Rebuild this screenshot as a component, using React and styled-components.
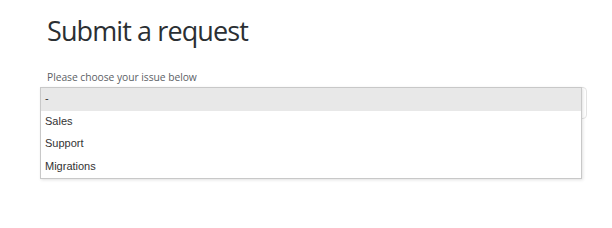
import React from "react";
import styled, { createGlobalStyle } from "styled-components";

const Global = createGlobalStyle`
  html, body { margin: 0; padding: 0; background: #fff; }
  body { width: 612px; height: 228px; overflow: hidden; }
`;

const Page = styled.div`
  padding: 12px 25px 0 40px;
  font-family: "Open Sans", "Noto Sans", sans-serif;
`;

const Title = styled.h1`
  margin: 0 0 0 7px;
  font-family: "Open Sans", sans-serif;
  font-weight: 400;
  font-size: 27px;
  letter-spacing: -0.9px;
  line-height: 38px;
  color: #2b2f33;
`;

const Label = styled.label`
  display: block;
  margin: 20px 0 3px 7px;
  font-size: 10.3px;
  letter-spacing: -0.05px;
  line-height: 14px;
  color: #5c6166;
`;

const SelectWrap = styled.div`
  position: relative;
`;

const SelectBox = styled.div`
  height: 32px;
  border: 1px solid #e3e3e3;
  border-radius: 4px;
  box-sizing: border-box;
`;

const Menu = styled.ul`
  position: absolute;
  top: 0;
  left: 0;
  width: 542px;
  margin: 0;
  padding: 0;
  list-style: none;
  background: #fff;
  border: 1px solid #c8c8c8;
  box-sizing: border-box;
  box-shadow: 1px 1px 3px rgba(0, 0, 0, 0.12);
`;

const Option = styled.li`
  height: 22.5px;
  padding: 0 0 2px 4px;
  box-sizing: border-box;
  display: flex;
  align-items: center;
  font-family: "Liberation Sans", Arial, sans-serif;
  font-size: 11px;
  color: #333;
  background: ${(p) => (p.$active ? "#e8e8e8" : "#fff")};
`;

export default function App() {
  const options = ["-", "Sales", "Support", "Migrations"];
  return (
    <>
      <Global />
      <Page>
        <Title>Submit a request</Title>
        <Label>Please choose your issue below</Label>
        <SelectWrap>
          <SelectBox />
          <Menu>
            {options.map((o, i) => (
              <Option key={o} $active={i === 0}>
                {o}
              </Option>
            ))}
          </Menu>
        </SelectWrap>
      </Page>
    </>
  );
}
